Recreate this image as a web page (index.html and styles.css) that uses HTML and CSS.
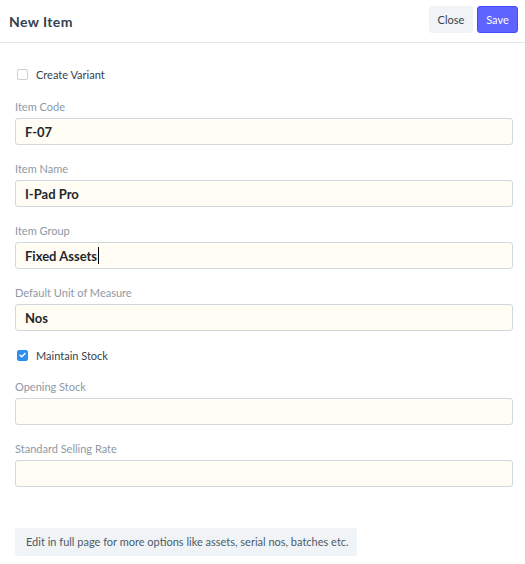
FILE: index.html
```html
<!DOCTYPE html>
<html>
<head>
<meta charset="utf-8">
<link rel="stylesheet" href="styles.css">
</head>
<body>
<div class="modal">
  <div class="header">
    <div class="title">New Item</div>
    <div class="actions">
      <button class="btn btn-default">Close</button>
      <button class="btn btn-primary">Save</button>
    </div>
  </div>
  <div class="body">
    <div class="check-row first">
      <span class="checkbox"></span>
      <span class="check-label">Create Variant</span>
    </div>
    <div class="field">
      <div class="label">Item Code</div>
      <div class="input">F-07</div>
    </div>
    <div class="field">
      <div class="label">Item Name</div>
      <div class="input">I-Pad Pro</div>
    </div>
    <div class="field">
      <div class="label">Item Group</div>
      <div class="input focused">Fixed Assets<span class="caret"></span></div>
    </div>
    <div class="field">
      <div class="label">Default Unit of Measure</div>
      <div class="input">Nos</div>
    </div>
    <div class="check-row">
      <span class="checkbox checked"><svg viewBox="0 0 10 10" width="10" height="10"><path d="M2.3 5.2 L4.2 7 L7.8 3.2" fill="none" stroke="#fff" stroke-width="1.6" stroke-linecap="round" stroke-linejoin="round"/></svg></span>
      <span class="check-label">Maintain Stock</span>
    </div>
    <div class="field">
      <div class="label">Opening Stock</div>
      <div class="input"></div>
    </div>
    <div class="field">
      <div class="label">Standard Selling Rate</div>
      <div class="input"></div>
    </div>
    <div class="help">Edit in full page for more options like assets, serial nos, batches etc.</div>
  </div>
</div>
</body>
</html>
```
FILE: styles.css
```css
html, body {
  margin: 0;
  padding: 0;
  background: #fff;
  font-family: "Lato", "Noto Sans", sans-serif;
}
.modal {
  width: 525px;
}
.header {
  height: 42px;
  border-bottom: 1px solid #e3e6e8;
  display: flex;
  align-items: center;
  justify-content: space-between;
  padding: 0 7px 0 9px;
}
.title {
  font-size: 14px;
  font-weight: 700;
  color: #36414c;
  letter-spacing: 0.4px;
}
.actions {
  display: flex;
  gap: 4px;
  padding-bottom: 3px;
}
.btn {
  height: 27px;
  border-radius: 3px;
  font-family: inherit;
  font-size: 11px;
  padding: 0;
  border: 1px solid transparent;
  cursor: pointer;
}
.btn-default {
  background: #f0f4f7;
  color: #36414c;
  width: 44px;
}
.btn-primary {
  background: #5e64ff;
  border-color: #444bff;
  color: #fff;
  width: 41px;
}
.body {
  padding: 23px 12px 0 15px;
}
.check-row {
  height: 16px;
  display: flex;
  align-items: center;
  margin: 13px 0 16px;
}
.check-row.first {
  margin-top: 0;
  margin-bottom: 17px;
}
.checkbox {
  width: 9px;
  height: 9px;
  border: 1px solid #c8cfd5;
  border-radius: 2px;
  margin-left: 2px;
  margin-right: 8px;
  display: flex;
  align-items: center;
  justify-content: center;
  box-sizing: content-box;
}
.checkbox.checked {
  background: #2f8ff0;
  border-color: #2f8ff0;
}
.checkbox svg {
  display: block;
}
.check-label {
  font-size: 11px;
  color: #36414c;
}
.field {
  margin-bottom: 16px;
}
.label {
  height: 16px;
  line-height: 16px;
  font-size: 11px;
  color: #8d99a6;
  margin-bottom: 3px;
}
.input {
  height: 27px;
  box-sizing: border-box;
  border: 1px solid #d1d8dd;
  border-radius: 3px;
  background: #fffdf4;
  padding: 0 9px;
  font-size: 13px;
  font-weight: 700;
  color: #1f272e;
  display: flex;
  align-items: center;
}
.caret {
  display: inline-block;
  width: 1px;
  height: 17px;
  background: #000;
  margin-left: 1px;
}
.help {
  margin-top: 25px;
  display: inline-block;
  background: #f0f4f7;
  color: #4c5a67;
  font-size: 11px;
  line-height: 28px;
  height: 28px;
  padding: 0 8px 0 11px;
  border-radius: 3px;
}
```
